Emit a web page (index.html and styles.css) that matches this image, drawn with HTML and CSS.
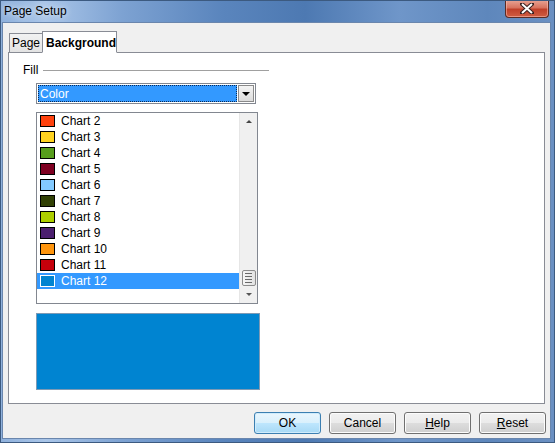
FILE: index.html
```html
<!DOCTYPE html>
<html lang="en">
  <head>
    <meta charset="UTF-8" />
    <title>Page Setup</title>
    <link rel="stylesheet" href="styles.css">
  </head>
  <body>
    <div class="window">
      <!-- title bar -->
      <div class="titlebar">
        <span class="title">Page Setup</span>
        <div class="close">
          <svg width="14" height="11" viewBox="0 0 14 11">
            <path d="M2 1 L12 10 M12 1 L2 10" stroke="#3a2020" stroke-width="4" stroke-linecap="square" />
            <path d="M2 1 L12 10 M12 1 L2 10" stroke="#ffffff" stroke-width="2" />
          </svg>
        </div>
      </div>

      <div class="client">
        <div class="tabs">
          <div class="tab">Page</div>
          <div class="tab active">Background</div>
        </div>

        <div class="panel">
          <div class="fill-head">
            <span>Fill</span>
            <div class="rule"></div>
          </div>

          <div class="combo">
            <div class="combo-field"><span>Color</span></div>
            <div class="combo-btn"><span class="tri-down"></span></div>
          </div>

          <div class="listbox">
            <ul class="items">
              <li><span class="swatch" style="background:#ff420e"></span>Chart 2</li>
              <li><span class="swatch" style="background:#ffd320"></span>Chart 3</li>
              <li><span class="swatch" style="background:#579d1c"></span>Chart 4</li>
              <li><span class="swatch" style="background:#7e0021"></span>Chart 5</li>
              <li><span class="swatch" style="background:#83caff"></span>Chart 6</li>
              <li><span class="swatch" style="background:#314004"></span>Chart 7</li>
              <li><span class="swatch" style="background:#aecf00"></span>Chart 8</li>
              <li><span class="swatch" style="background:#4b1f6f"></span>Chart 9</li>
              <li><span class="swatch" style="background:#ff950e"></span>Chart 10</li>
              <li><span class="swatch" style="background:#c5000b"></span>Chart 11</li>
              <li class="selected"><span class="swatch" style="background:#0084d1"></span>Chart 12</li>
            </ul>
            <div class="vscroll">
              <div class="arrow"><span class="tri-up-small"></span></div>
              <div class="track"></div>
              <div class="thumb"><span></span><span></span><span></span><span></span></div>
              <div class="arrow"><span class="tri-down-small"></span></div>
            </div>
          </div>

          <div class="preview"></div>
        </div>

        <div class="buttons">
          <button class="btn default">OK</button>
          <button class="btn">Cancel</button>
          <button class="btn"><u>H</u>elp</button>
          <button class="btn"><u>R</u>eset</button>
        </div>
      </div>
    </div>
  </body>
</html>
```

FILE: styles.css
```css
body {
  margin: 0;
  font-family: "Liberation Sans", Arial, sans-serif;
  font-size: 12px;
  color: #000;
}

.window {
  width: 555px;
  height: 443px;
  background: linear-gradient(to right, #8fb1dc 0%, #a9c5e8 8%, #7da2d2 22%, #5a85bd 40%, #4d79b2 55%, #6f96c9 72%, #5e87bc 88%, #6b90c2 100%);
  box-sizing: border-box;
  border: 1px solid #3c5a80;
  overflow: hidden;
}

.titlebar {
  height: 22px;
  display: flex;
  justify-content: space-between;
  align-items: flex-start;
}

.title {
  margin: 3px 0 0 3px;
  color: #000;
  text-shadow: 0 0 6px rgba(255, 255, 255, 0.9);
}

.close {
  width: 42px;
  height: 17px;
  margin: -1px 5px 0 0;
  border: 1px solid #5b2b24;
  border-top: none;
  border-radius: 0 0 4px 4px;
  background: linear-gradient(to bottom, #e8a596 0%, #d8735f 45%, #c0402a 55%, #cf5d42 100%);
  display: flex;
  justify-content: center;
  align-items: center;
  box-shadow: inset 0 0 0 1px rgba(255, 200, 190, 0.5);
}

.client {
  width: 547px;
  height: 415px;
  margin-left: 2px;
  background: #f0f0f0;
  border: 0;
  box-shadow: 0 0 0 1px #6a86ad;
  display: flex;
  flex-direction: column;
}

.tabs {
  display: flex;
  align-items: flex-end;
  height: 22px;
  margin: 7px 0 0 6px;
  position: relative;
  z-index: 2;
}

.tab {
  box-sizing: border-box;
  height: 19px;
  width: 34px;
  padding: 2px 0 0 2px;
  border: 1px solid #898c95;
  border-bottom: none;
  background: linear-gradient(to bottom, #f2f2f2, #e3e3e3);
  white-space: nowrap;
}

.tab.active {
  height: 22px;
  width: 75px;
  padding: 4px 0 0 3px;
  margin-left: -1px;
  font-weight: bold;
  background: #fff;
  border-bottom: 1px solid #fff;
  margin-bottom: -1px;
}

.panel {
  box-sizing: border-box;
  width: 537px;
  height: 352px;
  margin-left: 5px;
  background: #fff;
  border: 1px solid #898c95;
  display: flex;
  flex-direction: column;
  align-items: flex-start;
  padding: 10px 0 0 27px;
}

.fill-head {
  display: flex;
  align-items: center;
  height: 14px;
  margin-left: -13px;
}

.rule {
  width: 226px;
  height: 1px;
  margin-left: 5px;
  background: #a0a0a0;
}

.combo {
  box-sizing: border-box;
  width: 220px;
  height: 21px;
  margin-top: 6px;
  border: 1px solid #828790;
  padding: 1px;
  display: flex;
}

.combo-field {
  flex: 1;
  background: #3399ff;
  color: #fff;
  border: 1px dotted #0a2a55;
  display: flex;
  align-items: center;
  padding-left: 1px;
}

.combo-btn {
  width: 16px;
  margin-left: 1px;
  box-sizing: border-box;
  border: 1px solid #8a8a8a;
  background: linear-gradient(to bottom, #f4f4f4, #dcdcdc);
  display: flex;
  justify-content: center;
  align-items: center;
}

.tri-down {
  width: 0;
  height: 0;
  border-left: 4px solid transparent;
  border-right: 4px solid transparent;
  border-top: 4px solid #000;
}

.listbox {
  box-sizing: border-box;
  width: 222px;
  height: 192px;
  margin-top: 8px;
  border: 1px solid #828790;
  display: flex;
}

.items {
  list-style: none;
  margin: 0;
  padding: 0;
  flex: 1;
}

.items li {
  height: 16px;
  display: flex;
  align-items: center;
  padding-left: 3px;
}

.items li.selected {
  background: #3399ff;
  color: #fff;
}

.swatch {
  box-sizing: border-box;
  width: 15px;
  height: 12px;
  border: 1px solid #000;
  margin-right: 6px;
}

.items li.selected .swatch {
  border-color: #fff;
}

.vscroll {
  width: 17px;
  background: #f0f0f0;
  border-left: 1px solid #e6e6e6;
  display: flex;
  flex-direction: column;
  align-items: center;
}

.vscroll .arrow {
  height: 17px;
  width: 17px;
  display: flex;
  justify-content: center;
  align-items: center;
}

.vscroll .track {
  flex: 1;
}

.vscroll .thumb {
  box-sizing: border-box;
  width: 14px;
  height: 16px;
  border: 1px solid #8c8c8c;
  border-radius: 2px;
  background: linear-gradient(to right, #f6f6f6, #e2e2e2);
  display: flex;
  flex-direction: column;
  justify-content: center;
  align-items: center;
  gap: 2px;
}

.vscroll .thumb span {
  width: 7px;
  height: 1px;
  background: #6a6a6a;
}

.tri-up-small {
  width: 0;
  height: 0;
  border-left: 3px solid transparent;
  border-right: 3px solid transparent;
  border-bottom: 3px solid #444;
}

.tri-down-small {
  width: 0;
  height: 0;
  border-left: 3px solid transparent;
  border-right: 3px solid transparent;
  border-top: 3px solid #555;
}

.preview {
  box-sizing: border-box;
  width: 224px;
  height: 77px;
  margin-top: 9px;
  background: #0084d1;
  border: 1px solid #7d9ab5;
}

.buttons {
  display: flex;
  justify-content: flex-end;
  gap: 8px;
  margin-top: 8px;
  padding-right: 4px;
}

.btn {
  box-sizing: border-box;
  width: 67px;
  height: 22px;
  font-family: "Liberation Sans", Arial, sans-serif;
  font-size: 12px;
  color: #000;
  border: 1px solid #707070;
  border-radius: 3px;
  background: linear-gradient(to bottom, #f2f2f2 0%, #ebebeb 50%, #dddddd 51%, #cfcfcf 100%);
  box-shadow: inset 0 0 0 1px #fcfcfc;
  padding: 0;
}

.btn.default {
  border-color: #3c7fb1;
  background: linear-gradient(to bottom, #eaf6fd 0%, #d9f0fc 50%, #bee6fd 51%, #a7d9f5 100%);
  box-shadow: inset 0 0 0 1px #d0ecfc;
}
```
